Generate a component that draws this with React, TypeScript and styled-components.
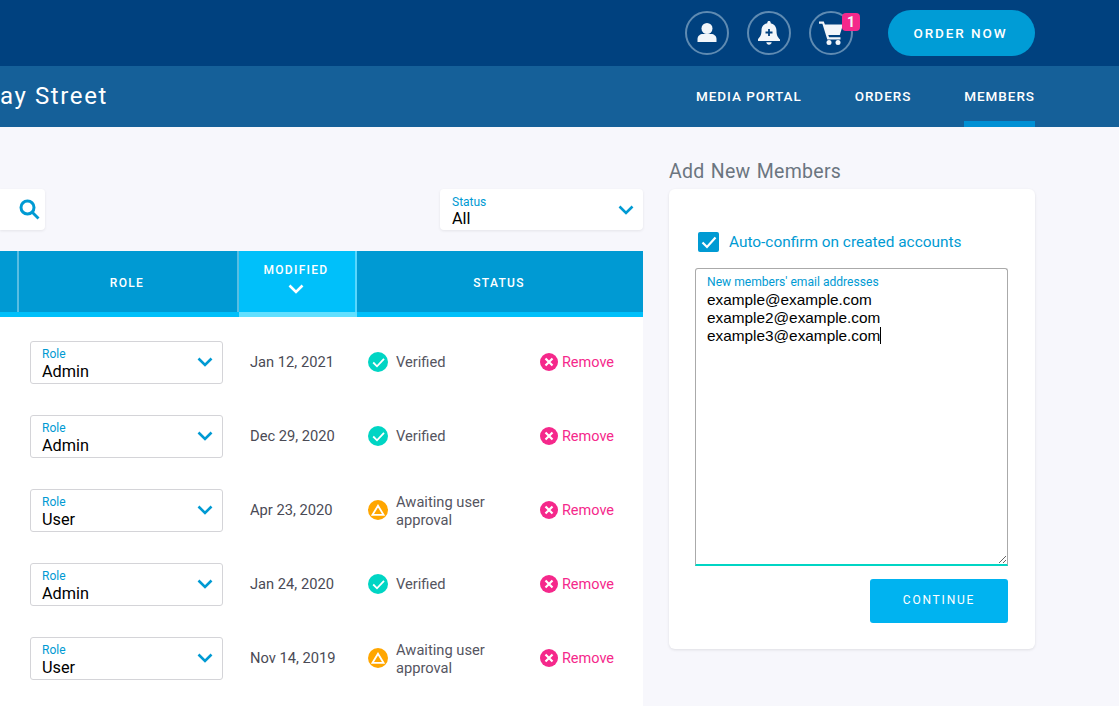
import React from 'react';
import styled, { createGlobalStyle } from 'styled-components';

const GlobalStyle = createGlobalStyle`
  html, body {
    margin: 0;
    padding: 0;
    height: 100%;
    overflow: hidden;
    background: #f7f7fc;
    font-family: Roboto, "Liberation Sans", sans-serif;
  }
  * {
    box-sizing: border-box;
  }
`;

type Member = {
  role: string;
  modified: string;
  status: 'verified' | 'awaiting';
};

const members: Member[] = [
  { role: 'Admin', modified: 'Jan 12, 2021', status: 'verified' },
  { role: 'Admin', modified: 'Dec 29, 2020', status: 'verified' },
  { role: 'User', modified: 'Apr 23, 2020', status: 'awaiting' },
  { role: 'Admin', modified: 'Jan 24, 2020', status: 'verified' },
  { role: 'User', modified: 'Nov 14, 2019', status: 'awaiting' },
];

const Chevron: React.FC<{ color?: string }> = ({ color = '#009ad3' }) => (
  <svg width="16" height="10" viewBox="0 0 16 10" fill="none">
    <path d="M1.5 1.5 8 8l6.5-6.5" stroke={color} strokeWidth="2.6" />
  </svg>
);

const App: React.FC = () => {
  return (
    <Page>
      <GlobalStyle />
      <TopBar>
        <IconCircle>
          <svg width="22" height="22" viewBox="0 0 22 22" fill="#f2f6fa">
            <circle cx="11" cy="6.500" r="5.500" />
            <path d="M1.500 20v-3c0-3 2.500-5 5.500-5h8c3 0 5.500 2 5.500 5v3z" />
          </svg>
        </IconCircle>
        <IconCircle>
          <svg width="24" height="26" viewBox="0 0 24 26">
            <path
              fill="#f2f6fa"
              d="M12 1c1 0 1.700.7 1.700 1.700v.6c3.700.8 5.800 3.700 5.800 7.400 0 4.600 1.300 6.500 3.500 8.800V21H1v-2c2.200-2.300 3.500-4.200 3.500-8.800 0-3.700 2.100-6.100 5.800-6.900v-.6C10.300 1.700 11 1 12 1zM9.300 22.200h5.400c-.2 1.500-1.300 2.500-2.700 2.500s-2.500-1-2.700-2.500z"
            />
            <path d="M12 9v7M8.500 12.500h7" stroke="#00417f" strokeWidth="1.800" />
          </svg>
        </IconCircle>
        <IconCircle>
          <svg width="24" height="24" viewBox="0 0 24 24" fill="#f2f6fa">
            <path d="M0 .5h4.800l1.100 3H24l-3.200 10.500H9.300l.8 2.200h11.400v2.300H8.300L3.400 2.800H0z" />
            <circle cx="10" cy="21.500" r="2.500" />
            <circle cx="19" cy="21.500" r="2.500" />
          </svg>
          <Badge>1</Badge>
        </IconCircle>
        <OrderButton>ORDER NOW</OrderButton>
      </TopBar>

      <SubBar>
        <SiteTitle>ay Street</SiteTitle>
        <Nav>
          <NavItem>MEDIA PORTAL</NavItem>
          <NavItem>ORDERS</NavItem>
          <NavItem $active>MEMBERS</NavItem>
        </Nav>
      </SubBar>

      <Main>
        <ListColumn>
          <Toolbar>
            <SearchBox>
              <svg width="21" height="21" viewBox="0 0 21 21" fill="none" stroke="#009ad3">
                <circle cx="8.500" cy="8.500" r="6.500" strokeWidth="3" />
                <path d="M13 13l6.500 6.500" strokeWidth="2.800" />
              </svg>
            </SearchBox>
            <StatusFilter>
              <FieldText>
                <FieldLabel>Status</FieldLabel>
                <FieldValue>All</FieldValue>
              </FieldText>
              <Chevron />
            </StatusFilter>
          </Toolbar>

          <TableHead>
            <HeadCell />
            <HeadCell>ROLE</HeadCell>
            <HeadCell $sorted>
              MODIFIED
              <Chevron color="#ffffff" />
            </HeadCell>
            <HeadCell>STATUS</HeadCell>
          </TableHead>

          <TableBody>
            {members.map((m) => (
              <Row key={m.modified}>
                <RoleSelect>
                  <FieldText $bordered>
                    <FieldLabel>Role</FieldLabel>
                    <FieldValue>{m.role}</FieldValue>
                  </FieldText>
                  <Chevron />
                </RoleSelect>
                <DateCell>{m.modified}</DateCell>
                <StatusCell>
                  {m.status === 'verified' ? (
                    <StatusDot $color="#00d5c4">
                      <svg width="13" height="11" viewBox="0 0 13 11" fill="none">
                        <path d="M1.200 5.500l3.800 3.800 7-7.500" stroke="#fff" strokeWidth="1.800" />
                      </svg>
                    </StatusDot>
                  ) : (
                    <StatusDot $color="#ffa600">
                      <svg width="14" height="12" viewBox="0 0 14 12" fill="none">
                        <path d="M7 1.700 12.500 10.800H1.500z" stroke="#fff" strokeWidth="1.800" />
                      </svg>
                    </StatusDot>
                  )}
                  <StatusText $wrapped={m.status === 'awaiting'}>
                    {m.status === 'verified' ? 'Verified' : 'Awaiting user approval'}
                  </StatusText>
                  <RemoveLink>
                    <RemoveDot>
                      <svg width="10" height="10" viewBox="0 0 10 10" fill="none">
                        <path d="M1.500 1.500l7 7M8.500 1.500l-7 7" stroke="#fff" strokeWidth="2.200" />
                      </svg>
                    </RemoveDot>
                    Remove
                  </RemoveLink>
                </StatusCell>
              </Row>
            ))}
          </TableBody>
        </ListColumn>

        <SideColumn>
          <SideTitle>Add New Members</SideTitle>
          <Card>
            <CheckRow>
              <CheckBox>
                <svg width="16" height="13" viewBox="0 0 16 13" fill="none">
                  <path d="M1.500 6.500l4.500 4.500 8.500-9.500" stroke="#fff" strokeWidth="2.200" />
                </svg>
              </CheckBox>
              Auto-confirm on created accounts
            </CheckRow>
            <EmailField>
              <EmailLabel>New members' email addresses</EmailLabel>
              <EmailLine>example@example.com</EmailLine>
              <EmailLine>example2@example.com</EmailLine>
              <EmailLine>
                example3@example.com
                <Caret />
              </EmailLine>
            </EmailField>
            <CardFooter>
              <ContinueButton>CONTINUE</ContinueButton>
            </CardFooter>
          </Card>
        </SideColumn>
      </Main>
    </Page>
  );
};

export default App;

// Styled Components
const Page = styled.div`
  width: 1119px;
  height: 706px;
  overflow: hidden;
  display: flex;
  flex-direction: column;
`;

const TopBar = styled.header`
  height: 66px;
  background: #00417f;
  display: flex;
  align-items: center;
  justify-content: flex-end;
  gap: 18px;
  padding: 0 84px 0 0;
`;

const IconCircle = styled.div`
  position: relative;
  width: 44px;
  height: 44px;
  border-radius: 50%;
  border: 2px solid #5f8bb2;
  display: flex;
  align-items: center;
  justify-content: center;
`;

const Badge = styled.span`
  position: absolute;
  top: 0;
  right: -9px;
  width: 18px;
  height: 18px;
  border-radius: 4px;
  background: #f5288b;
  color: #f2f6fa;
  font-size: 14px;
  font-weight: 700;
  display: flex;
  align-items: center;
  justify-content: center;
`;

const OrderButton = styled.button`
  width: 147px;
  height: 46px;
  margin-left: 17px;
  padding: 0 8px 0 6px;
  border: 0;
  border-radius: 23px;
  background: #009cd6;
  color: #fff;
  font-family: Roboto, sans-serif;
  font-size: 13.500px;
  font-weight: 500;
  letter-spacing: 1.900px;
`;

const SubBar = styled.div`
  height: 61px;
  background: #156099;
  display: flex;
  align-items: stretch;
  justify-content: space-between;
  padding-right: 84px;
`;

const SiteTitle = styled.h1`
  margin: 0;
  padding-bottom: 2px;
  display: flex;
  align-items: center;
  color: #fff;
  font-size: 24px;
  font-weight: 400;
  letter-spacing: 1.600px;
  white-space: nowrap;
`;

const Nav = styled.nav`
  display: flex;
  gap: 53px;
`;

const NavItem = styled.a<{ $active?: boolean }>`
  display: flex;
  align-items: center;
  height: 100%;
  padding-top: 4px;
  color: #fff;
  font-size: 13.500px;
  font-weight: 500;
  letter-spacing: 0.950px;
  border-bottom: 6px solid ${(p) => (p.$active ? '#0090d4' : 'transparent')};
`;

const Main = styled.main`
  flex: 1;
  min-height: 0;
  display: flex;
`;

const ListColumn = styled.section`
  width: 643px;
  padding-top: 62px;
  display: flex;
  flex-direction: column;
`;

const Toolbar = styled.div`
  display: flex;
  justify-content: space-between;
  height: 41px;
  margin-bottom: 21px;
`;

const SearchBox = styled.div`
  width: 45px;
  background: #fff;
  border-radius: 0 4px 4px 0;
  box-shadow: 0 1px 3px rgba(0, 0, 0, 0.08);
  display: flex;
  align-items: center;
  justify-content: flex-end;
  padding-right: 5px;
`;

const StatusFilter = styled.div`
  width: 203px;
  background: #fff;
  border-radius: 4px;
  box-shadow: 0 1px 3px rgba(0, 0, 0, 0.08);
  display: flex;
  align-items: center;
  justify-content: space-between;
  padding: 0 9px 0 12px;
`;

const FieldText = styled.div<{ $bordered?: boolean }>`
  display: flex;
  flex-direction: column;
  padding-top: ${(p) => (p.$bordered ? '4px' : '5px')};
  row-gap: ${(p) => (p.$bordered ? '1px' : '0')};
`;

const FieldLabel = styled.div`
  color: #009ad3;
  font-size: 12px;
  line-height: 14px;
`;

const FieldValue = styled.div`
  color: #000;
  font-size: 16.300px;
  line-height: 20px;
`;

const TableHead = styled.div`
  display: grid;
  grid-template-columns: 19px 220px 118px 286px;
  height: 66px;
  background: #009ad3;
  border-bottom: 5px solid #00c0fa;
`;

const HeadCell = styled.div<{ $sorted?: boolean }>`
  display: flex;
  flex-direction: column;
  align-items: center;
  justify-content: center;
  gap: 7px;
  padding: ${(p) => (p.$sorted ? '0 2px 6px 0' : '2px 2px 0 0')};
  color: #fff;
  font-size: 12px;
  font-weight: 500;
  letter-spacing: 1.300px;
  border-right: 2px solid rgba(255, 255, 255, 0.35);
  background: ${(p) => (p.$sorted ? '#00c0fa' : 'transparent')};
  &:last-child {
    border-right: 0;
  }
  ${(p) =>
    p.$sorted &&
    `
    box-shadow: 0 5px 0 #62e0ff;
  `}
`;

const TableBody = styled.div`
  flex: 1;
  background: #fff;
  padding-top: 8px;
`;

const Row = styled.div`
  display: grid;
  grid-template-columns: 18px 220px 118px 287px;
  height: 74px;
  align-items: center;
`;

const RoleSelect = styled.div`
  grid-column: 2;
  width: 193px;
  height: 43px;
  margin-left: 12px;
  border: 1px solid #d4d4d8;
  border-radius: 3px;
  display: flex;
  align-items: center;
  justify-content: space-between;
  padding: 0 9px 0 11px;
`;

const DateCell = styled.div`
  padding-left: 12px;
  color: #4a4a55;
  font-size: 14.700px;
`;

const StatusCell = styled.div`
  display: flex;
  align-items: center;
  padding: 0 29px 0 12px;
`;

const StatusDot = styled.span<{ $color: string }>`
  flex: none;
  width: 20px;
  height: 20px;
  border-radius: 50%;
  background: ${(p) => p.$color};
  display: flex;
  align-items: center;
  justify-content: center;
`;

const StatusText = styled.div<{ $wrapped?: boolean }>`
  width: 110px;
  margin-left: 8px;
  padding-top: ${(p) => (p.$wrapped ? '1px' : '0')};
  color: #55555f;
  font-size: 14.700px;
  line-height: 18px;
`;

const RemoveLink = styled.a`
  margin-left: auto;
  display: flex;
  align-items: center;
  gap: 4px;
  color: #f5288b;
  font-size: 14.500px;
`;

const RemoveDot = styled.span`
  width: 18px;
  height: 18px;
  border-radius: 50%;
  background: #f5288b;
  display: flex;
  align-items: center;
  justify-content: center;
`;

const SideColumn = styled.aside`
  width: 392px;
  padding: 32px 0 0 26px;
`;

const SideTitle = styled.h2`
  margin: 0;
  height: 30px;
  line-height: 26px;
  color: #6b7580;
  font-size: 19.500px;
  font-weight: 400;
  letter-spacing: 0.300px;
  word-spacing: 1px;
`;

const Card = styled.div`
  width: 366px;
  height: 460px;
  background: #fff;
  border-radius: 6px;
  box-shadow: 0 1px 3px rgba(0, 0, 0, 0.1);
  padding: 43px 27px 0 26px;
`;

const CheckRow = styled.label`
  display: flex;
  align-items: center;
  gap: 10px;
  height: 20px;
  margin-left: 3px;
  color: #009ad3;
  font-size: 15.400px;
`;

const CheckBox = styled.span`
  width: 21px;
  height: 20px;
  border-radius: 2px;
  background: #009ad3;
  display: flex;
  align-items: center;
  justify-content: center;
`;

const EmailField = styled.div`
  width: 313px;
  height: 298px;
  margin-top: 16px;
  padding: 6px 11px;
  border: 1px solid #aaaaaa;
  border-bottom: 2px solid #00d5c4;
  border-radius: 3px 3px 0 0;
  overflow: auto;
  resize: vertical;
  background: #fff;
`;

const EmailLabel = styled.div`
  color: #009ad3;
  font-size: 12.100px;
  line-height: 14px;
  margin-bottom: 2px;
`;

const EmailLine = styled.div`
  color: #000;
  font-family: "Liberation Sans", Arial, sans-serif;
  font-size: 15.350px;
  line-height: 18px;
`;

const Caret = styled.span`
  display: inline-block;
  width: 1px;
  height: 17px;
  background: #000;
  vertical-align: -3px;
`;

const CardFooter = styled.div`
  width: 313px;
  margin-top: 13px;
  display: flex;
  justify-content: flex-end;
`;

const ContinueButton = styled.button`
  width: 138px;
  height: 44px;
  padding: 0 0 3px;
  border: 0;
  border-radius: 3px;
  background: #00b3f0;
  color: #fff;
  font-family: Roboto, sans-serif;
  font-size: 12px;
  font-weight: 400;
  letter-spacing: 1.800px;
`;
